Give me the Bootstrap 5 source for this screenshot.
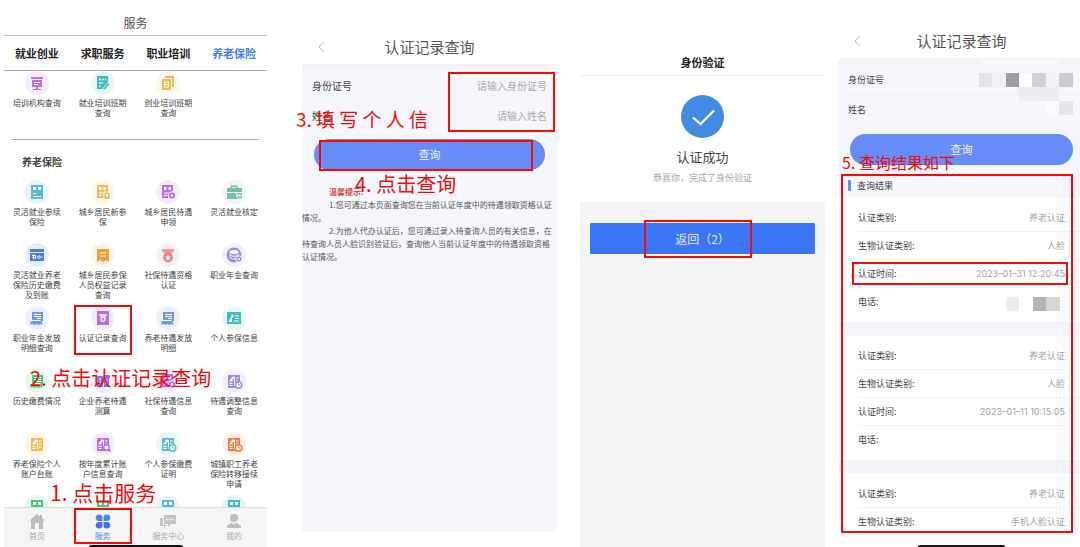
<!DOCTYPE html>
<html lang="zh-CN">
<head>
<meta charset="utf-8">
<meta name="viewport" content="width=device-width, initial-scale=1">
<title>养老保险认证记录查询</title>
<link rel="stylesheet" href="https://cdn.jsdelivr.net/npm/bootstrap@5.3.0/dist/css/bootstrap.min.css">
<style>
body{font-family:"Noto Sans CJK SC",sans-serif;background:#fff;color:#444;font-size:9px;line-height:13px}
a{color:inherit;text-decoration:none}
.steps{padding-left:4px}
.phone{position:relative;min-width:0;flex:1 1 0}
.p-home{flex-grow:263;height:100vh}
.p-form{flex-grow:255;margin-left:35px}
.p-done{flex-grow:245;margin-left:23px}
.p-result{flex-grow:242;margin-left:13px}
/* annotations */
.note{position:absolute;z-index:5;color:#f40a0a;font-size:20px;line-height:24px;white-space:nowrap}
.frame{position:absolute;z-index:4;border:2px solid #f40a0a;pointer-events:none}
/* service page */
.home-title{height:36px;flex:none;padding-top:11px;font-size:12px;line-height:24px;border-bottom:1px solid #bbb;color:#555}
.tabs{height:35px;flex:none;font-size:11px;font-weight:700;color:#222;border-bottom:1px solid #b5adb5}
.tabs .active{color:#3f82e8}
.svc-scroll{flex:1 1 0;min-height:0;overflow:hidden}
.svc{display:grid;grid-template-columns:repeat(4,1fr);grid-auto-rows:63px}
.svc a{position:relative;display:flex;flex-direction:column;align-items:center;gap:3px;font-size:8px;line-height:10px;text-align:center;white-space:nowrap}
.svc svg{width:24px;height:24px;flex:none}
.first{height:68px}
.rule{margin:0 8px;border-top:1px solid #aaa}
.group-title{font-size:10px;line-height:16px;font-weight:700;margin:14px 0 10px 18px;color:#444}
.tabbar{position:relative;height:40px;flex:none;background:#f6f6f6;border-top:1px solid #ddd;z-index:2;color:#aaa;font-size:8px;line-height:10px}
.tabbar a{position:relative;flex:1 1 0;display:flex;flex-direction:column;align-items:center;padding-top:6px;gap:2px}
.tabbar svg{width:16px;height:15px}
.tabbar .active{color:#4a86e8}
.home-line{position:absolute;bottom:0;left:50%;width:94px;height:2px;margin-left:-47px;background:#111;border-radius:2px 2px 0 0}
/* shared form */
.bar-title{position:relative;height:34px;font-size:15px;line-height:34px;text-align:center;color:#555}
.p-result .bar-title{padding-left:5px}
.back{position:absolute;left:16px;top:0;display:flex;align-items:center;height:34px}
.back svg{width:7px;height:12px}
.panel{background:#f5f7fc;border-top:6px solid #f3f3f3}
.field{display:flex;align-items:center;justify-content:space-between;margin-left:10px;height:30px;padding-right:10px}
.field + .field{border-top:1px solid #eff1f5}
.p-form .field{font-size:10px}
.field input{width:110px;border:0;padding:0;background:none;text-align:right;color:#777;outline:0}
.field input::placeholder{color:#aaa;opacity:1}
.pill{position:relative;display:block;border:0;border-radius:16px;height:31px;background:#668cf6;color:#eef2ff;font-size:11px}
.tips{font-size:8px;line-height:13px;color:#555;padding-top:15px}
.tips p{margin:0;text-indent:27px}
.tips .hot{color:#d94b4b;font-weight:700}
/* success */
.done-title{height:26px;font-size:11px;line-height:24px;font-weight:700;color:#222;border-bottom:1px solid #eee}
.done-body{height:126px;padding-top:19px}
.done-body svg{width:43px;height:43px}
.done-foot{flex:1;background:#f5f5f5;padding:21px 10px}
.return{position:relative;width:100%;height:31px;border:0;border-radius:1px;background:#3b76f6;color:#dfe8ff;font-size:12px}
/* records */
.mosaic{position:absolute;right:7px;top:-5px;width:94px;height:56px}
.res-title{height:23px;padding-left:10px;display:flex;align-items:center;gap:6px}
.res-title i{width:3px;height:11px;border-radius:1px;background:#668cf6}
.rec{background:#fff;padding:6px 0 7px 20px;margin:0}
.rec + .rec{border-top:13px solid #f4f5fa;box-shadow:inset 0 1px 0 #fafafc}
.rec > div{position:relative;display:flex;align-items:center;justify-content:space-between;height:28px;padding-right:15px}
.rec > div + div{border-top:1px solid #f4f4f4}
.rec dt{font-weight:400}
.rec dd{margin:0;color:#a5a5a5}
.rec .num{font-family:Inter,sans-serif}
.rec dd svg{display:block;width:54px;height:14px;margin:4px 5px 0 0}
.page-line{position:fixed;left:auto;right:75px;width:87px;margin:0}
/* icon colours */
.c-pur{color:#b96df0}.c-teal{color:#3fbfba}.c-gold{color:#f0bd55}.c-cyan{color:#5abdd8}.c-green{color:#76bf9f}
.c-blue{color:#5078e8}.c-org{color:#efa041}.c-red{color:#e77b7b}.c-lav{color:#978eea}.c-sky{color:#7096ee}
.c-grn{color:#50c57e}.c-vio{color:#7777ef}.c-fire{color:#f07c45}
</style>
</head>
<body>
<svg class="d-none" aria-hidden="true">
<defs>
<symbol id="board" viewBox="0 0 24 24"><path d="M6 6h12v2H6zM7 9h10v7H7zM11 16h2v2h3v1H8v-1h3z"/><path stroke="#fff" d="M9 11.500h6M9 13.500h4"/></symbol>
<symbol id="edit" viewBox="0 0 24 24"><path d="M6 5h11v6l-6 7H6zM12 18l5-6 1.500 1.200-4.500 5H12z"/><path stroke="#fff" stroke-width="1.500" stroke-dasharray="2 1" d="M8 8.500h7"/><path stroke="#fff" d="M8 12h4M8 15h2"/></symbol>
<symbol id="books" viewBox="0 0 24 24"><path d="M9 5h9v11h-2V7H9zM6 8h9v11H6z"/><path fill="none" stroke="#fff" d="M8.500 11h4v5h-4zM8.500 13.500h4"/></symbol>
<symbol id="doc" viewBox="0 0 24 24"><path d="M6 5h12v14H6z"/><path fill="#fff" d="M8 7h3v3H8zM13 7h3v3h-3z"/><path stroke="#fff" d="M8 13.500h3M8 16.500h8"/></symbol>
<symbol id="docs" viewBox="0 0 24 24"><path d="M6 5h11v13H6z"/><path fill="#fff" d="M8 7h2.500v3H8zM12.500 7H15v3h-2.500zM8 12.500h4v1H8zM8 15h3v1H8z"/><path stroke="#fff" d="M13 12h6v7.500h-6z"/><path fill="#fff" d="M15 14h2v3h-2z"/></symbol>
<symbol id="docr" viewBox="0 0 24 24"><path d="M6 5h11v13H6z"/><path fill="#fff" d="M8 7h2.500v3H8zM12.500 7H15v3h-2.500zM8 12.500h4v1H8zM8 15h3v1H8z"/><circle cx="16" cy="15.500" r="3.800" stroke="#fff"/><circle cx="16" cy="15.500" r="1.300" fill="#fff"/></symbol>
<symbol id="case" viewBox="0 0 24 24"><path fill-rule="evenodd" d="M8.500 8V5.500h7V8H20v4H5V8zm1.500-1v1h4V7zM5 13h15v6H5z"/><path stroke="#fff" d="M15 12.500h5.500V17l-2.700 2.500L15 17z"/><circle cx="17.700" cy="15.500" r="1.200" fill="#fff"/></symbol>
<symbol id="tax" viewBox="0 0 24 24"><path d="M5 6h14v3H5zM5 10h14v8H5z"/><path stroke="#fff" fill="none" d="M7 12.500h3M7 14.500h3M8.500 11.500v5M10.500 12v4M17.500 14h-5M14.500 12l-2 2 2 2"/></symbol>
<symbol id="mark2" viewBox="0 0 24 24"><path d="M6 6h12v13l-3-2-3 2-3-2-3 2z"/><path stroke="#fff" d="M9 10h6M9 13h6"/></symbol>
<symbol id="medal" viewBox="0 0 24 24"><path d="M6 6h12v2l-3 3H9L6 8z" opacity=".7"/><circle cx="12" cy="14.500" r="4.800"/><path fill="#fff" d="m12 11.500 1 2 2 .3-1.500 1.400.4 2.200-1.900-1-1.900 1 .4-2.200L9 13.800l2-.3z"/></symbol>
<symbol id="coins" viewBox="0 0 24 24"><circle cx="12" cy="12" r="7.500"/><ellipse cx="12" cy="9" rx="4.500" ry="2" fill="#fff"/><path fill="none" stroke="#fff" d="M7.500 11c0 3 9 3 9 0M7.500 13.500c0 3 8 3 8 1"/><circle cx="17" cy="16" r="3.200" stroke="#fff"/><circle cx="17" cy="16" r="1" fill="#fff"/></symbol>
<symbol id="receipt" viewBox="0 0 24 24"><path d="M7 6h11v9H7zM5.500 14h11l1 5-2-1-2 1-2-1-2 1-2-1-2 1z"/><path stroke="#fff" d="M9 8.500h7M9 10.500h7M12 12.500h4M5.500 14.500h10"/></symbol>
<symbol id="cert" viewBox="0 0 24 24"><path d="M6 5h12v14H6z"/><path fill="none" stroke="#fff" stroke-width="1.300" d="M9 9h6l-1 1.800h-4z"/><circle cx="12" cy="13.300" r="2" fill="none" stroke="#fff" stroke-width="1.300"/></symbol>
<symbol id="person" viewBox="0 0 24 24"><path d="M5 6h14v12H5z"/><path fill="#fff" d="m10 8 2 2-2 2v4H7c0-3 2-3 2-5z"/><path stroke="#fff" d="M13 10h4M13 12.500h4M12 15h5"/></symbol>
<symbol id="tile" viewBox="0 0 24 24"><path d="M6 6h12v13H6z"/><path fill="#fff" d="m11 7 1.500 2-2 1.500v2H7.500c0-2 2-2 2-4zM7.500 14h3v1h-3zM7.500 16h3v1h-3z"/><path stroke="#fff" d="M12.500 8v9M14 9h2.500M14 12h2.500M14 15h2.500"/></symbol>
<symbol id="clock" viewBox="0 0 24 24"><use href="#tile"/><circle cx="16.500" cy="16" r="3.200" fill="#fff" stroke="currentColor" stroke-width="1.500"/><path fill="none" stroke="currentColor" d="M16.500 14.500V16h1.500"/></symbol>
<symbol id="find" viewBox="0 0 24 24"><use href="#tile"/><circle cx="15.500" cy="15.500" r="2.800" fill="#fff" stroke="currentColor" stroke-width="1.400"/><path stroke="currentColor" stroke-width="1.500" d="m17.500 17.500 2 2"/></symbol>
<symbol id="house" viewBox="0 0 24 24"><path d="M6 7h6v11H6zM13 6h6v3h-1v9h-5z"/><path stroke="#fff" d="M8 10h2M8 13h2M14.500 11h2M14.500 14h2"/></symbol>
<symbol id="chev" viewBox="0 0 7 12"><path d="M6 .5 1 6l5 5.500" fill="none" stroke="#bbb"/></symbol>
</defs>
</svg>

<main class="steps d-flex align-items-start">
<section class="phone p-home d-flex flex-column">
  <h1 class="home-title text-center mb-0 fw-normal">服务</h1>
  <nav class="tabs d-flex align-items-center text-center">
    <a class="flex-fill w-25" href="#">就业创业</a><a class="flex-fill w-25" href="#">求职服务</a><a class="flex-fill w-25" href="#">职业培训</a><a class="flex-fill w-25 active" href="#">养老保险</a>
  </nav>
  <div class="svc-scroll">
    <div class="svc first">
      <a href="#" data-i="board c-pur">培训机构查询</a>
      <a href="#" data-i="edit c-teal">就业培训班期<br>查询</a>
      <a href="#" data-i="books c-gold">创业培训班期<br>查询</a>
    </div>
    <div class="rule"></div>
    <h2 class="group-title">养老保险</h2>
    <div class="svc">
      <a href="#" data-i="doc c-cyan">灵活就业参续<br>保险</a>
      <a href="#" data-i="docs c-gold">城乡居民新参<br>保</a>
      <a href="#" data-i="docr c-pur">城乡居民待遇<br>申领</a>
      <a href="#" data-i="case c-green">灵活就业核定</a>
      <a href="#" data-i="tax c-blue">灵活就业养老<br>保险历史缴费<br>及到账</a>
      <a href="#" data-i="mark2 c-org">城乡居民参保<br>人员权益记录<br>查询</a>
      <a href="#" data-i="medal c-red">社保待遇资格<br>认证</a>
      <a href="#" data-i="coins c-lav">职业年金查询</a>
      <a href="#" data-i="receipt c-sky">职业年金发放<br>明细查询</a>
      <a href="#" data-i="cert c-pur">认证记录查询<span class="frame" style="inset:-1px 4px 14px 4px"></span></a>
      <a href="#" data-i="receipt c-sky">养老待遇发放<br>明细</a>
      <a href="#" data-i="person c-teal">个人参保信息</a>
      <a href="#" data-i="receipt c-grn">历史缴费情况</a>
      <a href="#" data-i="house c-vio">企业养老待遇<br>测算</a>
      <a href="#" data-i="docr c-pur">社保待遇信息<br>查询</a>
      <a href="#" data-i="clock c-lav">待遇调整信息<br>查询</a>
      <a href="#" data-i="tile c-gold">养老保险个人<br>账户台账</a>
      <a href="#" data-i="find c-pur">按年度累计账<br>户信息查询</a>
      <a href="#" data-i="clock c-cyan">个人参保缴费<br>证明</a>
      <a href="#" data-i="clock c-fire">城镇职工养老<br>保险转移接续<br>申请</a>
      <a href="#" data-i="doc c-grn" aria-label="更多"></a>
      <a href="#" data-i="doc c-grn" aria-label="更多"></a>
      <a href="#" data-i="doc c-cyan" aria-label="更多"></a>
      <a href="#" data-i="doc c-teal" aria-label="更多"></a>
    </div>
  </div>
  <nav class="tabbar d-flex">
    <a href="#"><svg viewBox="0 0 16 15" fill="#bdbdbd"><path d="M8 0 .5 6.500 2 7v8h4V9h4v6h4V7l1.500-.5L13 4V1h-2v1.500z"/></svg>首页</a>
    <a href="#" class="active"><svg viewBox="0 0 16 15" fill="#4a86e8"><path d="M4.500.5A3.300 3.300 0 1 0 4.500 7H7.500V4A3.300 3.300 0 0 0 4.500.5zM11.500.5A3.300 3.300 0 1 1 11.500 7H8.500V4a3.300 3.300 0 0 1 3-3.500z"/><path fill="#4a6fe8" d="M4.500 14.500A3.300 3.300 0 1 1 4.500 8H7.500v3a3.300 3.300 0 0 1-3 3.500zM11.500 14.500A3.300 3.300 0 1 0 11.500 8H8.500v3a3.300 3.300 0 0 0 3 3.500z"/></svg>服务<span class="frame" style="inset:0 4px 3px 4px"></span></a>
    <a href="#"><svg viewBox="0 0 16 15" fill="#c4c4c4"><path d="M0 4h3v7h4l-3 3v-2H0z"/><path d="M4 1h12v9h-5l-3 3v-3H4z"/><path fill="none" stroke="#fff" stroke-width="1.500" stroke-dasharray="1.500 1.500" d="M6 5.500h8"/></svg>服务中心</a>
    <a href="#"><svg viewBox="0 0 16 15" fill="#bdbdbd"><circle cx="8" cy="4" r="4"/><path d="M5 9h6l4 3v2H1v-2z"/><path fill="none" stroke="#f6f6f6" d="m6 9 2 2 2-2"/></svg>我的</a>
    <span class="home-line"></span>
  </nav>
  <div class="note" style="left:26px;top:366px">2. 点击认证记录查询</div>
  <div class="note" style="left:46px;top:480px;font-size:21px">1. 点击服务</div>
</section>

<section class="phone p-form" style="padding-top:30px">
  <header class="bar-title"><a class="back" href="#" aria-label="返回上页"><svg><use href="#chev"/></svg></a>认证记录查询</header>
  <div class="panel" style="min-height:468px">
    <form class="position-relative">
      <div class="field"><label for="idno">身份证号</label><input id="idno" placeholder="请输入身份证号"></div>
      <div class="field"><label for="nm">姓名</label><input id="nm" placeholder="请输入姓名"></div>
      <div class="frame" style="right:2px;top:2px;width:107px;height:60px"></div>
      <div style="padding:9px 12px 0"><button type="button" class="pill w-100">查询<span class="frame" style="inset:1px 12px -1px 5px"></span></button></div>
    </form>
    <div class="tips">
      <p class="hot">温馨提示:</p>
      <p>1.您可通过本页面查询您在当前认证年度中的待遇领取资格认证情况。</p>
      <p>2.为他人代办认证后，您可通过录入待查询人员的有关信息，在待查询人员人脸识别验证后，查询他人当前认证年度中的待遇领取资格认证情况。</p>
    </div>
  </div>
  <div class="note" style="left:-6px;top:107px;font-size:19px">3. 填 写 个 人 信</div>
  <div class="note" style="left:53px;top:172px">4. 点击查询</div>
</section>

<section class="phone p-done d-flex flex-column min-vh-100 text-center" style="padding-top:50px">
  <header class="done-title">身份验证</header>
  <div class="done-body">
    <svg viewBox="0 0 43 43"><circle cx="21.500" cy="21.500" r="21.500" fill="#418be0"/><path d="m12 22.500 7.500 6.500L33 15.500" fill="none" stroke="#fff" stroke-width="2.200"/></svg>
    <div style="font-size:13px;line-height:18px;margin-top:10px">认证成功</div>
    <div style="color:#aaa;margin-top:5px">恭喜你，完成了身份验证</div>
  </div>
  <div class="done-foot"><button type="button" class="return">返回（2）<span class="frame" style="inset:-3px 28% -4px 24%"></span></button></div>
</section>

<section class="phone p-result" style="padding-top:24px">
  <header class="bar-title"><a class="back" href="#" aria-label="返回上页"><svg><use href="#chev"/></svg></a>认证记录查询</header>
  <div class="panel">
    <div class="position-relative">
      <div class="field">身份证号</div>
      <div class="field">姓名</div>
      <svg class="mosaic" viewBox="0 0 94 56" shape-rendering="crispEdges"><path fill="#f5f7fc" d="M0 0h80v5H0z"/><path fill="#e5e6ea" d="M0 14h13v14H0zM80 42h14v14H80z"/><path fill="#f1f2f5" d="M13 14h14v14H13zM67 14h13v14H67z"/><path fill="#9e9ea3" d="M27 14h13v14H27z"/><path fill="#fff" d="M40 14h13v14H40z"/><path fill="#d1d2d6" d="M53 14h14v14H53z"/><path fill="#cbccd0" d="M80 14h14v14H80z"/><path fill="#ededf1" d="M40 28h40v14H40z"/><path fill="#fafbfd" d="M67 42h13v14H67z"/></svg>
    </div>
    <div style="padding:10px 7px 9px 12px"><button type="button" class="pill w-100">查询</button></div>
    <div class="position-relative">
      <div class="res-title"><i></i>查询结果</div>
      <dl class="rec">
        <div><dt>认证类别:</dt><dd>养老认证</dd></div>
        <div><dt>生物认证类别:</dt><dd>人脸</dd></div>
        <div><dt>认证时间:</dt><dd class="num">2023–01–31 12:20:45</dd><span class="frame" style="inset:2px 12px 2px -6px"></span></div>
        <div><dt>电话:</dt><dd><svg viewBox="0 0 54 14" shape-rendering="crispEdges"><path fill="#eee" d="M0 0h13v14H0z"/><path fill="#b5b5b5" d="M27 0h13v14H27z"/><path fill="#d8d8d8" d="M40 0h14v14H40z"/></svg></dd></div>
      </dl>
      <dl class="rec">
        <div><dt>认证类别:</dt><dd>养老认证</dd></div>
        <div><dt>生物认证类别:</dt><dd>人脸</dd></div>
        <div><dt>认证时间:</dt><dd class="num">2023–01–11 10:15:05</dd></div>
        <div><dt>电话:</dt><dd></dd></div>
      </dl>
      <dl class="rec pb-0">
        <div><dt>认证类别:</dt><dd>养老认证</dd></div>
        <div><dt>生物认证类别:</dt><dd>手机人脸认证</dd></div>
      </dl>
      <div class="frame" style="inset:0 7px 2px 3px"></div>
    </div>
  </div>
  <div class="note" style="left:4px;top:150px;font-size:16px">5. 查询结果如下</div>
  <span class="home-line page-line"></span>
</section>
</main>
<script>
// Put the round service icon in front of each label
document.querySelectorAll('[data-i]').forEach(a => {
  const [id, tone] = a.dataset.i.split(' ');
  a.insertAdjacentHTML('afterbegin', `<svg class="${tone}" fill="currentColor" viewBox="0 0 24 24" aria-hidden="true"><circle cx="12" cy="12" r="12" opacity=".13"/><use href="#${id}"/></svg>`);
  const label = document.createElement('span');
  [...a.childNodes].forEach(n => { if (n.nodeType === 3 || n.nodeName === 'BR') label.append(n); });
  a.firstChild.after(label);
});
</script>
<script src="https://cdn.jsdelivr.net/npm/bootstrap@5.3.0/dist/js/bootstrap.bundle.min.js"></script>
</body>
</html>
